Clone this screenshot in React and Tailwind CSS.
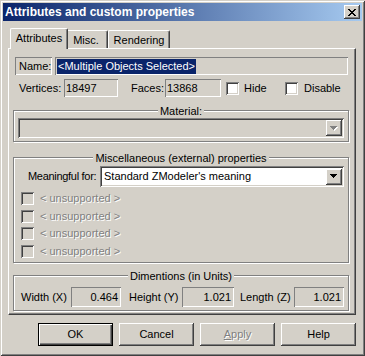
import React from "react";

const RAISED =
  "shadow-[inset_-1px_-1px_0_#404040,inset_1px_1px_0_#ffffff,inset_-2px_-2px_0_#808080,inset_2px_2px_0_#d4d0c8]";
const SUNKEN2 =
  "shadow-[inset_1px_1px_0_#808080,inset_-1px_-1px_0_#ffffff,inset_2px_2px_0_#404040,inset_-2px_-2px_0_#d4d0c8]";
const SUNKEN1 = "shadow-[inset_1px_1px_0_#808080,inset_-1px_-1px_0_#ffffff]";
const EMBOSS = "text-[#808080] [text-shadow:1px_1px_0_#ffffff]";

function CloseGlyph() {
  const px = [
    [0, 0], [1, 0], [6, 0], [7, 0],
    [1, 1], [2, 1], [5, 1], [6, 1],
    [2, 2], [3, 2], [4, 2], [5, 2],
    [3, 3], [4, 3],
    [2, 4], [3, 4], [4, 4], [5, 4],
    [1, 5], [2, 5], [5, 5], [6, 5],
    [0, 6], [1, 6], [6, 6], [7, 6],
  ];
  return (
    <svg width="8" height="7" viewBox="0 0 8 7" shapeRendering="crispEdges">
      {px.map(([x, y]) => (
        <rect key={x + "-" + y} x={x} y={y} width="1" height="1" fill="#000" />
      ))}
    </svg>
  );
}

function Arrow({ disabled }) {
  const rows = [
    [0, 7],
    [1, 5],
    [2, 3],
    [3, 1],
  ];
  return (
    <svg width="8" height="5" viewBox="0 0 8 5" shapeRendering="crispEdges">
      {disabled &&
        rows.map(([y, w]) => (
          <rect key={"s" + y} x={(7 - w) / 2 + 1} y={y + 1} width={w} height="1" fill="#ffffff" />
        ))}
      {rows.map(([y, w]) => (
        <rect key={y} x={(7 - w) / 2} y={y} width={w} height="1" fill={disabled ? "#808080" : "#000"} />
      ))}
    </svg>
  );
}

function Combo({ text, disabled, className }) {
  return (
    <div
      className={
        "h-[20px] flex items-center " +
        SUNKEN2 +
        " " +
        (disabled ? "bg-[#d4d0c8] " : "bg-white ") +
        className
      }
    >
      <span className="flex-1 pl-[4px] truncate">{text}</span>
      <div className={"w-[16px] h-[16px] mr-[2px] bg-[#d4d0c8] flex items-center justify-center " + RAISED}>
        <Arrow disabled={disabled} />
      </div>
    </div>
  );
}

function CheckBox({ disabled }) {
  return (
    <div
      className={
        "w-[13px] h-[13px] shrink-0 " + SUNKEN2 + (disabled ? " bg-[#d4d0c8]" : " bg-white")
      }
    />
  );
}

function Group({ legend, className, children }) {
  return (
    <div
      className={
        "relative border border-[#808080] shadow-[inset_1px_1px_0_#ffffff,1px_1px_0_#ffffff] " + className
      }
    >
      <div className="absolute left-0 right-0 top-[-6px] flex justify-center">
        <span className="bg-[#d4d0c8] px-[2px] h-[12px] leading-[12px] whitespace-nowrap">{legend}</span>
      </div>
      {children}
    </div>
  );
}

function Field({ children, className }) {
  return (
    <div className={"flex items-center bg-[#d4d0c8] " + SUNKEN1 + " " + className}>{children}</div>
  );
}

function Button({ children, isDefault, disabled }) {
  return (
    <div
      className={
        "w-[75px] h-[23px] flex items-center justify-center bg-[#d4d0c8] " +
        RAISED +
        (isDefault ? " outline outline-1 outline-black -outline-offset-1" : "")
      }
    >
      <div
        className={
          "w-full h-full flex items-center justify-center " +
          (isDefault
            ? "shadow-[inset_1px_1px_0_#000,inset_-1px_-1px_0_#000,inset_2px_2px_0_#ffffff,inset_-2px_-2px_0_#404040,inset_-3px_-3px_0_#808080]"
            : "")
        }
      >
        <span className={disabled ? EMBOSS : ""}>{children}</span>
      </div>
    </div>
  );
}

export default function App() {
  return (
    <div
      className={
        "w-[365px] h-[356px] bg-[#d4d0c8] p-[3px] flex flex-col text-[11px] leading-none text-black font-['Liberation_Sans',Arial,sans-serif] whitespace-nowrap " +
        "shadow-[inset_1px_1px_0_#d4d0c8,inset_-1px_-1px_0_#404040,inset_2px_2px_0_#ffffff,inset_-2px_-2px_0_#808080]"
      }
    >
      {/* Title bar */}
      <div className="h-[18px] flex items-center pl-[2px] pr-[2px] bg-[linear-gradient(to_right,#0a246a,#a6caf0)]">
        <span className="text-white font-bold text-[12px]">Attributes and custom properties</span>
        <div className={"ml-auto w-[16px] h-[14px] bg-[#d4d0c8] flex items-center justify-center " + RAISED}>
          <CloseGlyph />
        </div>
      </div>

      {/* Tabs + panel */}
      <div className="mt-[7px] ml-[5px] w-[348px] flex flex-col">
        <div className="h-[20px] flex items-end pl-[2px] relative z-10">
          <div className="w-[58px] h-[21px] -mb-px bg-[#d4d0c8] border-l border-t border-white border-r border-r-[#404040] rounded-t-[2px] shadow-[inset_-1px_0_0_#808080] flex items-center justify-center pb-[2px]">
            Attributes
          </div>
          <div className="w-[40px] h-[18px] bg-[#d4d0c8] border-t border-white border-r border-r-[#404040] rounded-tr-[2px] shadow-[inset_-1px_0_0_#808080] flex items-center justify-center pt-[2px] pr-[3px]">
            Misc.
          </div>
          <div className="w-[62px] h-[18px] bg-[#d4d0c8] border-t border-l border-white border-r border-r-[#404040] rounded-t-[2px] shadow-[inset_-1px_0_0_#808080] flex items-center justify-center pt-[2px]">
            Rendering
          </div>
        </div>

        <div className="h-[267px] border border-t-white border-l-white border-r-[#404040] border-b-[#404040] shadow-[inset_-1px_-1px_0_#808080] flex flex-col">
          {/* Name row */}
          <div className="mt-[8px] ml-[6px] mr-[7px] h-[18px] flex">
            <div className={"w-[37px] h-full flex items-center pl-[4px] " + SUNKEN1}>Name:</div>
            <Field className="ml-[3px] flex-1 h-full pl-[2px]">
              <span className="bg-[#0a246a] text-white px-[1px] py-[2px]">&lt;Multiple Objects Selected&gt;</span>
            </Field>
          </div>

          {/* Vertices row */}
          <div className="mt-[4px] ml-[10px] h-[18px] flex items-center">
            <span className="w-[45px]">Vertices:</span>
            <Field className="w-[54px] h-full pl-[2px]">18497</Field>
            <span className="ml-[13px] w-[34px]">Faces:</span>
            <Field className="w-[56px] h-full pl-[2px]">13868</Field>
            <div className="ml-[5px]">
              <CheckBox />
            </div>
            <span className="ml-[5px] w-[41px]">Hide</span>
            <CheckBox />
            <span className="ml-[6px]">Disable</span>
          </div>

          {/* Material */}
          <Group legend="Material:" className="mt-[13px] ml-[4px] w-[336px] h-[32px] pt-[7px] pl-[4px]">
            <Combo disabled text="" className="w-[326px]" />
          </Group>

          {/* Misc */}
          <Group
            legend="Miscellaneous (external) properties"
            className="mt-[15px] ml-[4px] w-[336px] h-[106px] pt-[8px]"
          >
            <div className="flex items-center pl-[14px]">
              <span className="w-[72px] tracking-[-0.3px]">Meaningful for:</span>
              <Combo text="Standard ZModeler's meaning" className="w-[244px] h-[21px]" />
            </div>
            <div className="mt-[5px] pl-[7px] flex flex-col gap-[4.5px]">
              {[0, 1, 2, 3].map((i) => (
                <div key={i} className="h-[13px] flex items-center">
                  <CheckBox disabled />
                  <span className={"ml-[6px] " + EMBOSS}>&lt; unsupported &gt;</span>
                </div>
              ))}
            </div>
          </Group>

          {/* Dimentions */}
          <Group legend="Dimentions (in Units)" className="mt-[12px] ml-[4px] w-[336px] h-[36px] pt-[11px]">
            <div className="flex items-center h-[20px] pl-[7px]">
              <span className="w-[50px]">Width (X)</span>
              <Field className="w-[50px] h-full justify-end pr-[3px]">0.464</Field>
              <span className="ml-[8px] w-[53px]">Height (Y)</span>
              <Field className="w-[52px] h-full justify-end pr-[3px]">1.021</Field>
              <span className="ml-[6px] w-[54px]">Length (Z)</span>
              <Field className="w-[50px] h-full justify-end pr-[3px]">1.021</Field>
            </div>
          </Group>
        </div>
      </div>

      {/* Buttons */}
      <div className="mt-[8px] ml-[35px] flex gap-[6px]">
        <Button isDefault>OK</Button>
        <Button>Cancel</Button>
        <Button disabled>
          <span className="underline">A</span>pply
        </Button>
        <Button>Help</Button>
      </div>
    </div>
  );
}
